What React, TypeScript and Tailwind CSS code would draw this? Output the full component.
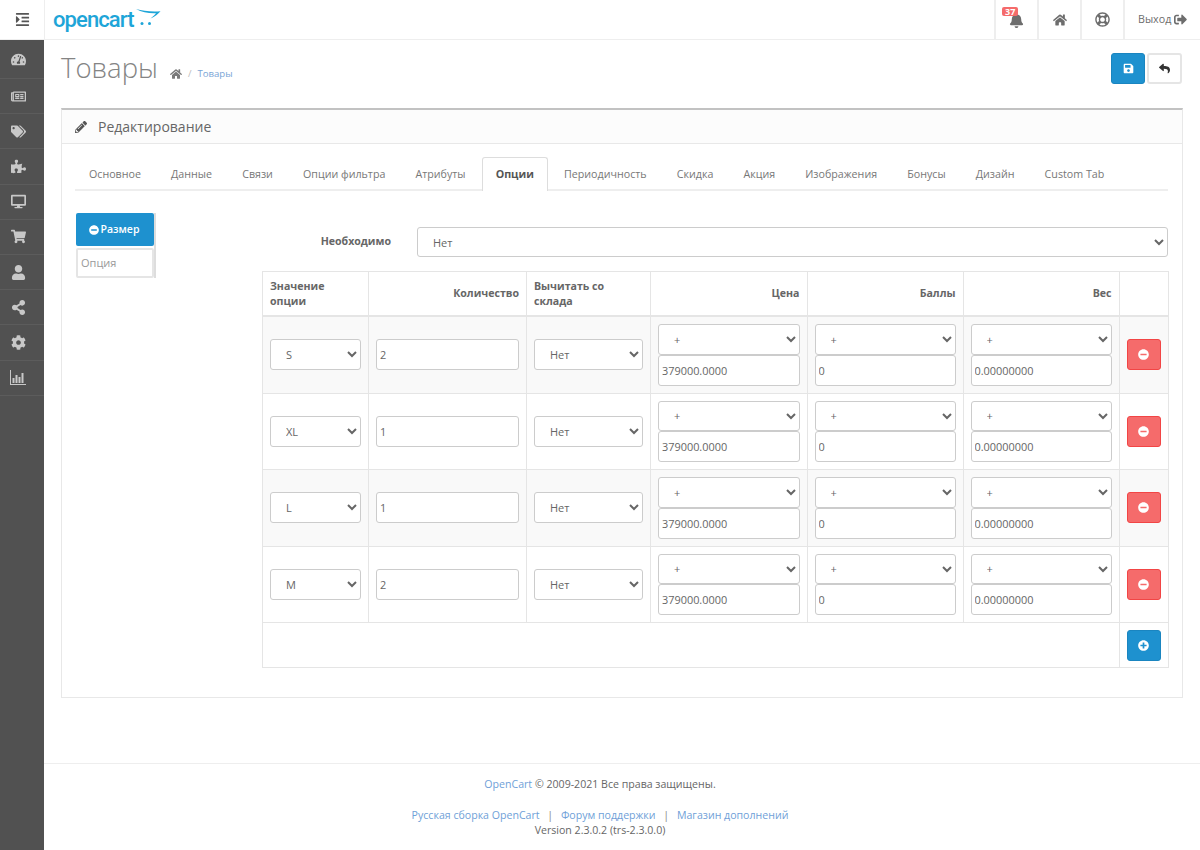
import {
  FaBell,
  FaCog,
  FaDesktop,
  FaHome,
  FaIndent,
  FaMinusCircle,
  FaPencilAlt,
  FaPlusCircle,
  FaPuzzlePiece,
  FaRegLifeRing,
  FaRegNewspaper,
  FaReply,
  FaSave,
  FaShareAlt,
  FaShoppingCart,
  FaSignOutAlt,
  FaTachometerAlt,
  FaTags,
  FaUser,
} from "react-icons/fa";

function BarsIcon({ size }: { size: number }) {
  return (
    <svg width={size + 1} height={size} viewBox="0 0 16 15" fill="currentColor">
      <path d="M0 0h1v14h15v1H0z" />
      <path d="M2.5 8h2v5h-2zM5.5 5h2v8h-2zM8.500 7h2v6h-2zM11.500 3h2v10h-2z" />
    </svg>
  );
}

const menu = [FaTachometerAlt, FaRegNewspaper, FaTags, FaPuzzlePiece, FaDesktop, FaShoppingCart, FaUser, FaShareAlt, FaCog, BarsIcon];
const tabs = ["Основное", "Данные", "Связи", "Опции фильтра", "Атрибуты", "Опции", "Периодичность", "Скидка", "Акция", "Изображения", "Бонусы", "Дизайн", "Custom Tab"];
const rows = [
  { size: "S", qty: "2" },
  { size: "XL", qty: "1" },
  { size: "L", qty: "1" },
  { size: "M", qty: "2" },
];

const field = "block w-full h-[30.75px] rounded-[3px] border border-[#ccc] bg-white text-[#666] outline-none";
const cell = "border border-[#e5e5e5] p-[7px] align-middle";
const head = "border border-[#e5e5e5] border-b-2 px-[7px] py-[6.5px] text-[10.6px] leading-[15px] font-bold text-[#666]";

function Select({ value }: { value: string }) {
  return (
    <select defaultValue={value} className={`${field} pl-[11px] text-[11px]`}>
      <option>{value}</option>
    </select>
  );
}

function Input({ value }: { value: string }) {
  return <input defaultValue={value} className={`${field} pl-[3px] text-[10.9px]`} />;
}

function PriceCell({ value }: { value: string }) {
  return (
    <td className={cell}>
      <Select value="+" />
      <Input value={value} />
    </td>
  );
}

function Logo() {
  return (
    <div className="flex items-start">
      <span className="font-['Roboto',sans-serif] text-[22px] leading-[26px] font-medium tracking-[-0.9px] text-[#1ea5d8]">opencart</span>
      <svg width="25" height="18" viewBox="0 0 25 18" className="mt-[1px] ml-[2px] text-[#1ea5d8]">
        <path d="M0 1C7 3 15 3.800 24.500 3.200 22 6 19 8.500 14.500 10.500 17 8.500 18.800 7 20 5.300 13 5.600 6 4.500 0 1Z" fill="currentColor" />
        <circle cx="6" cy="15.500" r="1.500" fill="currentColor" />
        <circle cx="13.500" cy="15.500" r="1.500" fill="currentColor" />
      </svg>
    </div>
  );
}

export default function App() {
  return (
    <div className="flex min-h-[850px] flex-col bg-white font-['Open_Sans',sans-serif] text-[12px] text-[#666]">
      <header className="flex h-[40px] shrink-0 border-b border-[#eee]">
        <div className="flex w-[45px] shrink-0 items-center justify-center border-r border-[#eee] text-[#555]">
          <FaIndent size={15} />
        </div>
        <div className="flex flex-1 items-center pl-[8px]">
          <Logo />
        </div>
        <div className="relative flex w-[43px] items-center justify-center border-l-2 border-[#eee] pt-[1px] text-[#6d6d6d]">
          <FaBell size={15} />
          <span className="absolute top-[7px] left-[6px] rounded-[2px] bg-[#f56b6b] px-[3px] text-[9px] leading-[9px] font-bold text-white">37</span>
        </div>
        <div className="flex w-[43px] items-center justify-center border-l-2 border-[#eee] text-[#6d6d6d]">
          <FaHome size={14} />
        </div>
        <div className="flex w-[43px] items-center justify-center border-l-2 border-[#eee] text-[#6d6d6d]">
          <FaRegLifeRing size={15} />
        </div>
        <div className="flex w-[77px] items-center gap-[3px] border-l-2 border-[#eee] pl-[13px] text-[10.7px] text-[#6d6d6d]">
          Выход <FaSignOutAlt size={13} />
        </div>
      </header>

      <div className="flex flex-1">
        <nav className="w-[44px] shrink-0 bg-[#515151] text-[#c8c8c8]">
          {menu.map((Icon, i) => (
            <div key={i} className={`flex items-center justify-center border-b border-[#5c5c5c] pr-[8px] ${i === 0 ? "h-[39px]" : "h-[35.2px]"}`}>
              <Icon size={15} />
            </div>
          ))}
        </nav>

        <main className="flex min-w-0 flex-1 flex-col">
          <div className="flex items-start justify-between pt-[13px] pr-[18px] pl-[17px]">
            <div className="flex items-center">
              <h1 className="text-[27.5px] leading-[30px] font-light text-[#848484]">Товары</h1>
              <div className="mt-[12px] ml-[12px] flex items-center text-[9.6px] text-[#7aa5d6]">
                <FaHome size={12} className="text-[#7a7a7a]" />
                <span className="mx-[6px] text-[#bbb]">/</span>
                <span>Товары</span>
              </div>
            </div>
            <div className="flex gap-[2px]">
              <button className="flex h-[31px] w-[34px] items-center justify-center rounded-[3px] border border-[#1a85c0] bg-[#1e91cf] text-white">
                <FaSave size={11} />
              </button>
              <button className="flex h-[31px] w-[35px] items-center justify-center rounded-[3px] border-2 border-[#e5e5e5] bg-white text-[#333]">
                <FaReply size={11} />
              </button>
            </div>
          </div>

          <section className="mt-[24px] mr-[17px] ml-[17px] border border-t-2 border-[#e8e8e8] border-t-[#c2c2c2]">
            <div className="flex h-[34px] items-center gap-[11px] border-b border-[#e8e8e8] bg-[#fcfcfc] pl-[13px] text-[14px] text-[#666]">
              <FaPencilAlt size={12} className="text-[#555]" />
              Редактирование
            </div>
            <div className="pt-[13px] pr-[14px] pb-[29px] pl-[13px]">
              <ul className="flex h-[34px] border-b-2 border-[#eee] text-[10.7px] text-[#777]">
                {tabs.map((t) =>
                  t === "Опции" ? (
                    <li key={t} className="mr-[2.1px] h-[34px] rounded-t-[3px] border border-b-0 border-[#ddd] bg-white px-[13px] pt-[8px] font-bold text-[#555]">
                      {t}
                    </li>
                  ) : (
                    <li key={t} className="mr-[2.1px] border border-transparent px-[13px] pt-[8px]">
                      {t}
                    </li>
                  ),
                )}
              </ul>

              <div className="mt-[22px] flex">
                <div className="w-[187px] shrink-0">
                  <div className="w-[81px] border-r-2 border-[#ddd] pl-[1px]">
                    <div className="flex h-[33px] w-[78px] items-center justify-center gap-[2px] rounded-[2px] bg-[#1e91cf] pr-[2px] text-[10.5px] font-semibold text-white">
                      <FaMinusCircle size={10} />
                      Размер
                    </div>
                    <div className="mt-[2px] flex h-[30px] w-[78px] items-center rounded-[2px] border-2 border-[#e5e5e5] pl-[3px] text-[11px] text-[#999]">Опция</div>
                  </div>
                </div>

                <div className="min-w-0 flex-1 pt-[14px]">
                  <div className="flex items-center">
                    <label className="w-[129px] shrink-0 text-right text-[10.6px] font-bold text-[#666]">Необходимо</label>
                    <select defaultValue="Нет" className="ml-[26px] h-[30px] min-w-0 flex-1 rounded-[3px] border border-[#ccc] bg-white pl-[11px] text-[11px] text-[#666] outline-none">
                      <option>Нет</option>
                    </select>
                  </div>

                  <table className="mt-[14px] w-full table-fixed border-collapse">
                    <colgroup>
                      <col className="w-[106px]" />
                      <col className="w-[158px]" />
                      <col className="w-[124px]" />
                      <col className="w-[156.5px]" />
                      <col className="w-[156px]" />
                      <col className="w-[156px]" />
                      <col className="w-[49.5px]" />
                    </colgroup>
                    <thead>
                      <tr>
                        <th className={`${head} text-left`}>Значение опции</th>
                        <th className={`${head} text-right`}>Количество</th>
                        <th className={`${head} text-left`}>Вычитать со склада</th>
                        <th className={`${head} text-right`}>Цена</th>
                        <th className={`${head} text-right`}>Баллы</th>
                        <th className={`${head} text-right`}>Вес</th>
                        <th className={head}></th>
                      </tr>
                    </thead>
                    <tbody>
                      {rows.map((r, i) => (
                        <tr key={r.size} className={i % 2 === 0 ? "bg-[#f9f9f9]" : "bg-white"}>
                          <td className={cell}>
                            <Select value={r.size} />
                          </td>
                          <td className={cell}>
                            <Input value={r.qty} />
                          </td>
                          <td className={cell}>
                            <Select value="Нет" />
                          </td>
                          <PriceCell value="379000.0000" />
                          <PriceCell value="0" />
                          <PriceCell value="0.00000000" />
                          <td className={cell}>
                            <button className="flex h-[31px] w-[34px] items-center justify-center rounded-[3px] border border-[#f24545] bg-[#f56b6b] text-white">
                              <FaMinusCircle size={11} />
                            </button>
                          </td>
                        </tr>
                      ))}
                    </tbody>
                    <tfoot>
                      <tr>
                        <td colSpan={6} className="border border-[#e5e5e5]"></td>
                        <td className="border border-[#e5e5e5] px-[7px] py-[6.5px] align-middle">
                          <button className="flex h-[31px] w-[34px] items-center justify-center rounded-[3px] border border-[#1a85c0] bg-[#1e91cf] text-white">
                            <FaPlusCircle size={11} />
                          </button>
                        </td>
                      </tr>
                    </tfoot>
                  </table>
                </div>
              </div>
            </div>
          </section>

          <footer className="mt-[65px] border-t border-[#eee] pt-[13px] pr-[44px] text-center text-[10.6px] leading-[15px] text-[#666]">
            <p>
              <span className="text-[#6f9fd8]">OpenCart</span> © 2009-2021 Все права защищены.
            </p>
            <p className="mt-[16px] text-[#6f9fd8]">
              Русская сборка OpenCart <span className="mx-[5px] text-[#888]">|</span> Форум поддержки <span className="mx-[5px] text-[#888]">|</span> Магазин дополнений
            </p>
            <p>Version 2.3.0.2 (trs-2.3.0.0)</p>
          </footer>
        </main>
      </div>
    </div>
  );
}
